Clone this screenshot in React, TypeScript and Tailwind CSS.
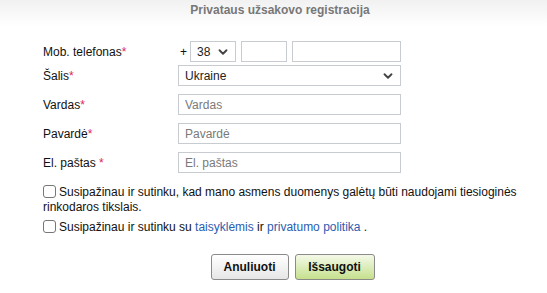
import { ChevronDown } from "lucide-react";

const inputClass =
  "h-[21px] w-[223px] border border-[#c8ccd0] bg-white px-[6px] text-[12px] text-[#333] outline-none placeholder:text-[#7a7a7a]";

function Label({ text, space }: { text: string; space?: boolean }) {
  return (
    <div className="w-[135px] text-[12px] text-[#111]">
      {text}
      {space ? " " : ""}
      <span className="text-[#e0245e]">*</span>
    </div>
  );
}

function FakeSelect({ value, width }: { value: string; width: string }) {
  return (
    <div
      className={`flex h-[21px] items-center justify-between border border-[#c8ccd0] bg-white pl-[6px] pr-[5px] text-[12px] text-[#222] ${width}`}
    >
      <span>{value}</span>
      <ChevronDown size={14} strokeWidth={3.2} className="text-[#444]" />
    </div>
  );
}

export default function App() {
  return (
    <div className="h-[293px] w-[547px] bg-white font-['Liberation_Sans',Arial,sans-serif]">
      <div className="bg-gradient-to-b from-[#f1f1f1] to-white pb-[8px] pl-[13px] pt-[2px] text-center text-[12px] font-bold leading-[16px] text-[#777]">
        Privataus užsakovo registracija
      </div>

      <div className="mt-[15px] pl-[43px]">
        <div className="flex items-center">
          <Label text="Mob. telefonas" />
          <span className="w-[12px] pl-[2px] text-[12px] text-[#111]">+</span>
          <div className="flex gap-[5px]">
            <FakeSelect value="38" width="w-[46px]" />
            <input className="h-[21px] w-[46px] border border-[#c8ccd0] bg-white outline-none" />
            <input className="h-[21px] w-[109px] border border-[#c8ccd0] bg-white outline-none" />
          </div>
        </div>

        <div className="mt-[3px] flex items-center">
          <Label text="Šalis" />
          <FakeSelect value="Ukraine" width="w-[223px]" />
        </div>

        <div className="mt-[8px] flex items-center">
          <Label text="Vardas" />
          <input className={inputClass} placeholder="Vardas" />
        </div>

        <div className="mt-[8px] flex items-center">
          <Label text="Pavardė" />
          <input className={inputClass} placeholder="Pavardė" />
        </div>

        <div className="mt-[8px] flex items-center">
          <Label text="El. paštas" space />
          <input className={inputClass} placeholder="El. paštas" />
        </div>

        <label className="mt-[10px] block pr-[20px] text-[12px] leading-[15px] text-[#111]">
          <span className="mr-[3px] inline-block h-[13px] w-[13px] translate-y-[2px] rounded-[3px] border border-[#777] bg-white" />
          Susipažinau ir sutinku, kad mano asmens duomenys galėtų būti naudojami tiesioginės
          rinkodaros tikslais.
        </label>

        <label className="mt-[3px] block text-[12px] leading-[15px] text-[#111]">
          <span className="mr-[3px] inline-block h-[13px] w-[13px] translate-y-[2px] rounded-[3px] border border-[#777] bg-white" />
          Susipažinau ir sutinku su <a className="text-[#2a5db0]">taisyklėmis</a> ir{" "}
          <a className="text-[#2a5db0]">privatumo politika</a> .
        </label>
      </div>

      <div className="mt-[19px] flex justify-center gap-[6px] pl-[38px]">
        <button
          className="h-[26px] w-[78px] rounded-[3px] border border-[#8a8a8a] bg-gradient-to-b from-white to-[#e6e6e6] text-[12px] font-bold text-[#111]"
          type="button"
        >
          Anuliuoti
        </button>
        <button
          className="h-[26px] w-[80px] rounded-[3px] border border-[#8a8a8a] bg-gradient-to-b from-[#f4f9e8] to-[#c6e08c] text-[12px] font-bold text-[#111]"
          type="button"
        >
          Išsaugoti
        </button>
      </div>
    </div>
  );
}
